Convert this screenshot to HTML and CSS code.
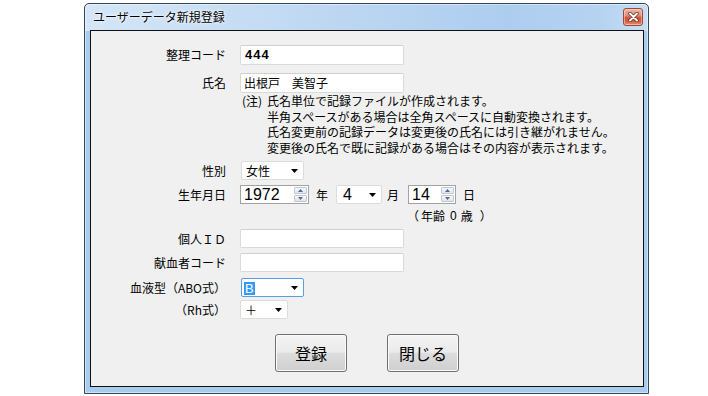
FILE: index.html
```html
<!DOCTYPE html>
<html lang="ja">
<head>
<meta charset="utf-8">
<title>ユーザーデータ新規登録</title>
<link rel="stylesheet" href="styles.css">
</head>
<body>
<div class="window">
  <div class="titlebar">
    <span class="title">ユーザーデータ新規登録</span>
    <div class="close">
      <svg width="11" height="10" viewBox="0 0 11 10"><path d="M2 1.5L9 8.5M9 1.5L2 8.5" stroke="#5a2a1e" stroke-width="3.4" stroke-linecap="round"/><path d="M2 1.5L9 8.5M9 1.5L2 8.5" stroke="#ffffff" stroke-width="2" stroke-linecap="round"/></svg>
    </div>
  </div>
  <div class="client">
    <div class="row r-code">
      <span class="lbl">整理コード</span>
      <div class="textbox tb-tall code">444</div>
    </div>
    <div class="row r-name">
      <span class="lbl">氏名</span>
      <div class="textbox tb-tall">出根戸　美智子</div>
    </div>
    <div class="row r-note">
      <span></span>
      <div class="note">
        <span class="note-mark">(注)</span>
        <div class="note-body">
          <div>氏名単位で記録ファイルが作成されます。</div>
          <div>半角スペースがある場合は全角スペースに自動変換されます。</div>
          <div>氏名変更前の記録データは変更後の氏名には引き継がれません。</div>
          <div>変更後の氏名で既に記録がある場合はその内容が表示されます。</div>
        </div>
      </div>
    </div>
    <div class="row r-sex">
      <span class="lbl">性別</span>
      <div class="select sel-sex"><span class="sel-val">女性</span><svg class="arrow" width="7" height="4" viewBox="0 0 7 4"><path d="M0 0H7L3.5 4Z"/></svg></div>
    </div>
    <div class="row r-birth">
      <span class="lbl">生年月日</span>
      <div class="birth">
        <div class="spin spin-year"><span class="spin-val">1972</span><div class="spin-btns"><div class="sb"><svg width="5" height="3" viewBox="0 0 5 3"><path d="M0 3H5L2.5 0Z"/></svg></div><div class="sb"><svg width="5" height="3" viewBox="0 0 5 3"><path d="M0 0H5L2.5 3Z"/></svg></div></div></div>
        <span class="unit u-year">年</span>
        <div class="select sel-month"><span class="sel-val num">4</span><svg class="arrow" width="7" height="4" viewBox="0 0 7 4"><path d="M0 0H7L3.5 4Z"/></svg></div>
        <span class="unit u-month">月</span>
        <div class="spin spin-day"><span class="spin-val">14</span><div class="spin-btns"><div class="sb"><svg width="5" height="3" viewBox="0 0 5 3"><path d="M0 3H5L2.5 0Z"/></svg></div><div class="sb"><svg width="5" height="3" viewBox="0 0 5 3"><path d="M0 0H5L2.5 3Z"/></svg></div></div></div>
        <span class="unit u-day">日</span>
      </div>
    </div>
    <div class="row r-age">
      <span></span>
      <div class="age"><span>（</span><span class="age-w">年齢</span><span class="age-num">0</span><span>歳</span><span class="age-close">）</span></div>
    </div>
    <div class="row r-id">
      <span class="lbl">個人ＩＤ</span>
      <div class="textbox"></div>
    </div>
    <div class="row r-donor">
      <span class="lbl">献血者コード</span>
      <div class="textbox"></div>
    </div>
    <div class="row r-abo">
      <span class="lbl">血液型（ABO式）</span>
      <div class="select sel-abo focused"><span class="sel-val"><span class="hl">B</span></span><svg class="arrow" width="7" height="4" viewBox="0 0 7 4"><path d="M0 0H7L3.5 4Z"/></svg></div>
    </div>
    <div class="row r-rh">
      <span class="lbl">（Rh式）</span>
      <div class="select sel-rh"><span class="sel-val">＋</span><svg class="arrow" width="7" height="4" viewBox="0 0 7 4"><path d="M0 0H7L3.5 4Z"/></svg></div>
    </div>
    <div class="buttons">
      <div class="btn">登録</div>
      <div class="btn">閉じる</div>
    </div>
  </div>
</div>
</body>
</html>
```

FILE: styles.css
```css
body {
  margin: 0;
  background: #ffffff;
  font-family: "Noto Sans CJK JP", "Noto Sans", sans-serif;
  font-size: 12px;
  color: #000000;
}

.window {
  margin: 3px 0 0 84px;
  width: 565px;
  height: 391px;
  box-sizing: border-box;
  border: 1px solid #34465a;
  border-radius: 5px 5px 0 0;
  background:
    linear-gradient(to right, #d4e6f8 0%, #c2daf3 35%, #adcdef 75%, #b6d3f1 92%, #c8def5 100%) top left / 100% 27px no-repeat,
    #a9cbee;
  box-shadow: inset 0 0 0 1px rgba(255, 255, 255, 0.45);
  padding: 0 4px 6px 5px;
  display: flex;
  flex-direction: column;
}

.titlebar {
  height: 26px;
  display: flex;
  align-items: center;
  justify-content: space-between;
  padding: 0 1px 0 3px;
}

.title {
  font-size: 12px;
  line-height: 16px;
  color: #000;
  text-shadow: 0 0 4px #ffffff, 0 0 2px #ffffff;
}

.close {
  width: 20px;
  height: 18px;
  box-sizing: border-box;
  border: 1px solid #9a4a38;
  border-radius: 3px;
  background: linear-gradient(#f0b8a8 0%, #e28f79 40%, #cf5237 55%, #d6623f 80%, #e6957a 100%);
  box-shadow: inset 0 0 0 1px rgba(255, 225, 215, 0.5);
  display: flex;
  align-items: center;
  justify-content: center;
}

.client {
  flex: 1;
  background: #f0f0f0;
  border: 1px solid #111111;
  display: flex;
  flex-direction: column;
}

.row {
  display: grid;
  grid-template-columns: 135px auto;
  column-gap: 14px;
  align-items: center;
  justify-items: start;
}

.lbl {
  justify-self: end;
  line-height: 16px;
  white-space: nowrap;
}

.r-code { margin-top: 14px; }
.r-name { margin-top: 8px; }
.r-note { margin-top: 0; align-items: start; }
.r-sex { margin-top: 6px; }
.r-birth { margin-top: 5px; }
.r-age { margin-top: 4px; }
.r-id { margin-top: 5px; }
.r-donor { margin-top: 5px; }
.r-abo { margin-top: 6px; }
.r-rh { margin-top: 3px; }

.textbox {
  width: 164px;
  height: 19px;
  box-sizing: border-box;
  background: #ffffff;
  border: 1px solid #dadada;
  border-top-color: #cfcfcf;
  border-radius: 2px;
  padding-left: 3px;
  line-height: 17px;
  white-space: nowrap;
}

.tb-tall {
  height: 20px;
  line-height: 18px;
}

.code {
  font-family: "Liberation Sans", sans-serif;
  font-weight: bold;
  font-size: 13px;
  letter-spacing: 1px;
  padding-left: 4px;
}

.note {
  display: flex;
  padding-left: 2px;
  line-height: 15.5px;
  white-space: nowrap;
}

.note-mark {
  width: 25px;
}

.select {
  height: 19px;
  box-sizing: border-box;
  background: #ffffff;
  border: 1px solid #dcdcdc;
  border-radius: 2px;
  display: flex;
  align-items: center;
  justify-content: space-between;
  padding: 0 5px 0 4px;
}

.select .arrow {
  fill: #000000;
}

.sel-val {
  line-height: 17px;
}

.sel-sex { width: 63px; margin-left: 1px; }
.sel-month { width: 46px; padding-right: 5px; padding-left: 6px; }
.sel-abo { width: 63px; margin-left: 1px; padding-left: 2px; }
.sel-rh { width: 48px; padding-right: 5px; }

.num {
  font-family: "Liberation Sans", sans-serif;
  font-size: 16px;
}

.focused {
  border-color: #5b9de0;
}

.hl {
  display: inline-block;
  background: #3399ff;
  color: #ffffff;
  font-family: "Liberation Sans", sans-serif;
  font-size: 13px;
  line-height: 13px;
  padding: 0 1px;
}

.birth {
  display: flex;
  align-items: center;
}

.spin {
  height: 19px;
  box-sizing: border-box;
  background: #ffffff;
  border: 1px solid #a3a3a3;
  display: flex;
  align-items: stretch;
}

.spin-year { width: 69px; }
.spin-day { width: 48px; }

.spin-val {
  flex: 1;
  font-family: "Liberation Sans", sans-serif;
  font-size: 16px;
  line-height: 17px;
  padding-left: 3px;
}

.spin-btns {
  width: 13px;
  display: flex;
  flex-direction: column;
  gap: 1px;
  padding: 1px 1px 1px 0;
}

.sb {
  flex: 1;
  box-sizing: border-box;
  border: 1px solid #c2c9d2;
  border-radius: 1px;
  background: linear-gradient(#f7f8fa, #dfe4ea);
  display: flex;
  align-items: center;
  justify-content: center;
}

.sb svg {
  fill: #4f6a96;
}

.unit {
  line-height: 16px;
}

.u-year { margin: 0 8px 0 7px; }
.u-month { margin: 0 9px 0 5px; }
.u-day { margin-left: 7px; }

.age {
  margin-left: 167px;
  display: flex;
  line-height: 16px;
  white-space: nowrap;
}

.age-w {
  margin-left: 2px;
}

.age-num {
  font-family: "Liberation Sans", sans-serif;
  margin: 0 4px 0 5px;
}

.age-close {
  margin-left: 7px;
}

.buttons {
  margin-top: 15px;
  display: flex;
  justify-content: center;
  gap: 40px;
}

.btn {
  width: 72px;
  height: 38px;
  box-sizing: border-box;
  border: 1px solid #707070;
  border-radius: 3px;
  background: linear-gradient(#f3f3f3 0%, #ebebeb 48%, #dddddd 50%, #cfcfcf 100%);
  box-shadow: inset 0 0 0 1px #fbfbfb;
  font-size: 16px;
  display: flex;
  align-items: center;
  justify-content: center;
}
```
